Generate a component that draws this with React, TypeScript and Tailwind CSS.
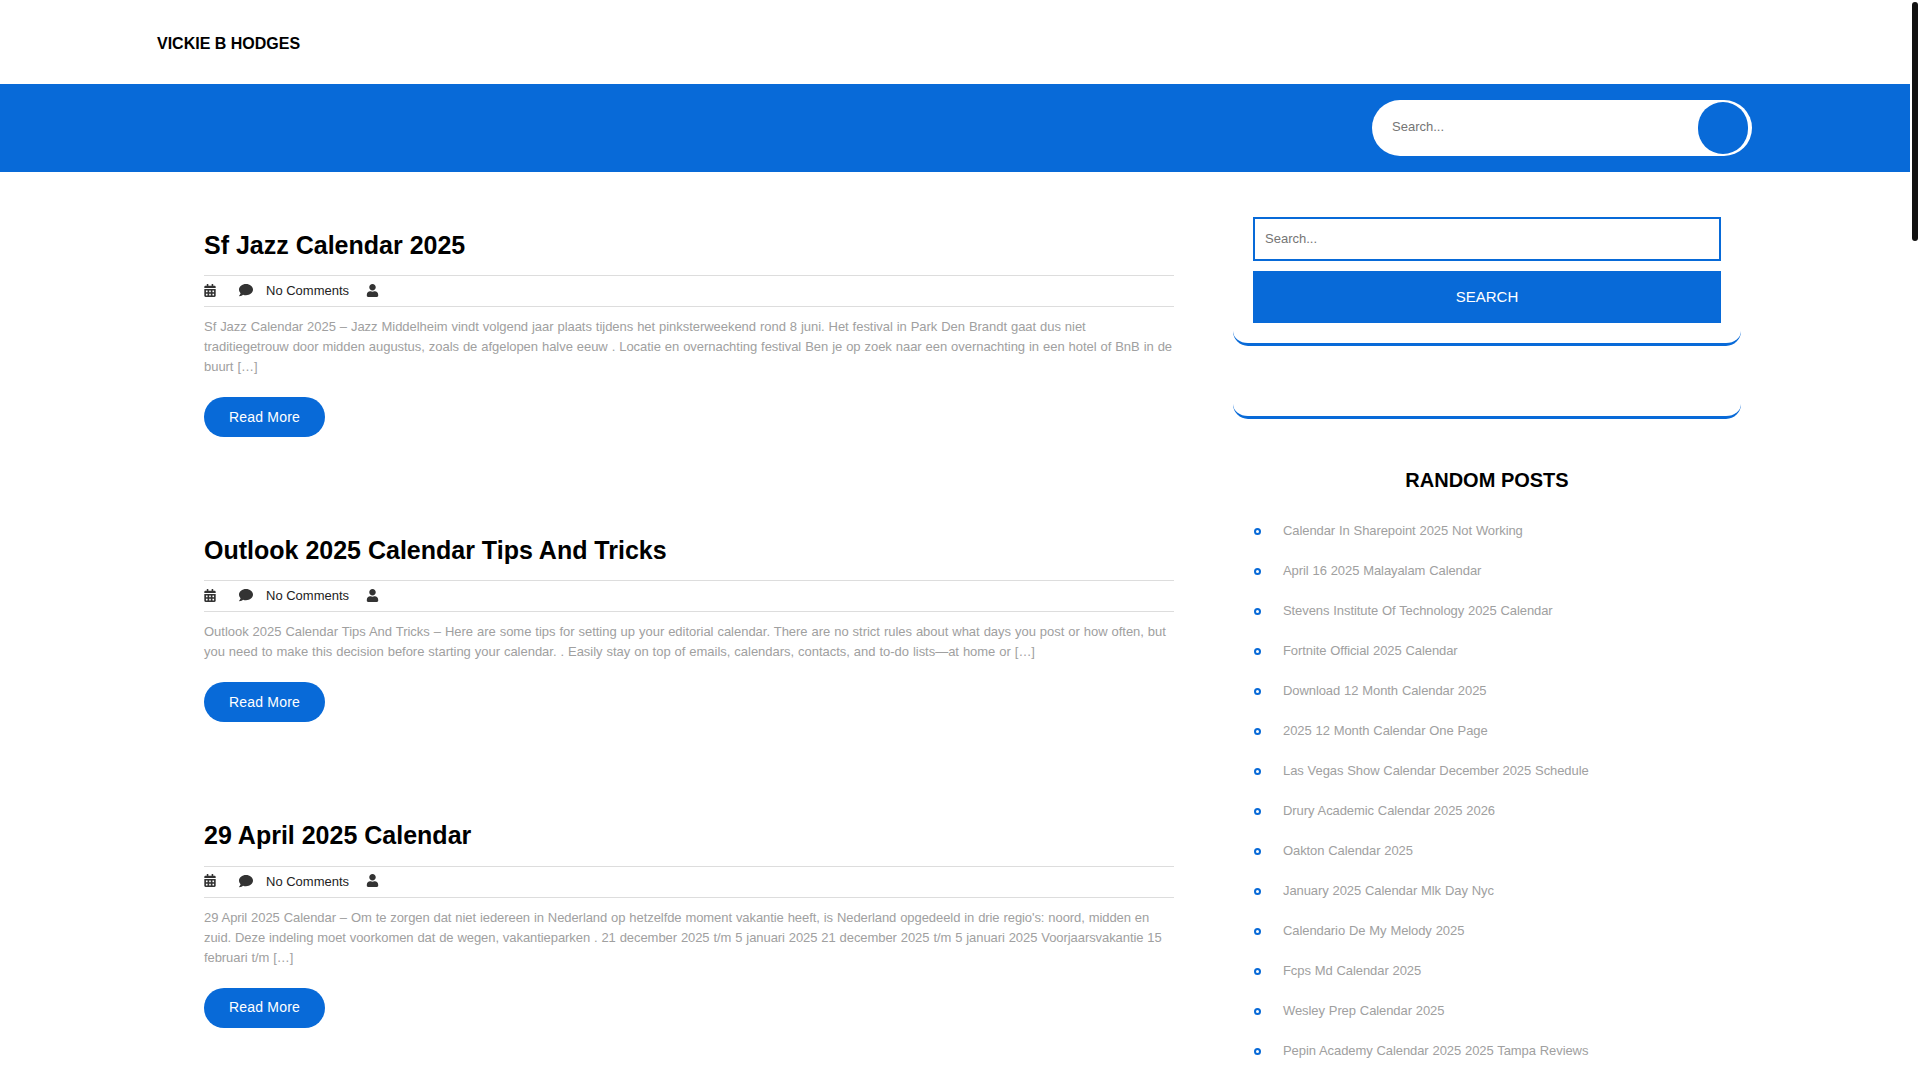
import { FaCalendarAlt, FaComment, FaUser } from "react-icons/fa";

const posts = [
  {
    title: "Sf Jazz Calendar 2025",
    fit: "tracking-[-0.04px]",
    excerpt:
      "Sf Jazz Calendar 2025 – Jazz Middelheim vindt volgend jaar plaats tijdens het pinksterweekend rond 8 juni. Het festival in Park Den Brandt gaat dus niet traditiegetrouw door midden augustus, zoals de afgelopen halve eeuw . Locatie en overnachting festival Ben je op zoek naar een overnachting in een hotel of BnB in de buurt […]",
  },
  {
    title: "Outlook 2025 Calendar Tips And Tricks",
    fit: "tracking-[-0.025px]",
    excerpt:
      "Outlook 2025 Calendar Tips And Tricks – Here are some tips for setting up your editorial calendar. There are no strict rules about what days you post or how often, but you need to make this decision before starting your calendar. . Easily stay on top of emails, calendars, contacts, and to-do lists—at home or […]",
  },
  {
    title: "29 April 2025 Calendar",
    fit: "tracking-[-0.07px]",
    excerpt:
      "29 April 2025 Calendar – Om te zorgen dat niet iedereen in Nederland op hetzelfde moment vakantie heeft, is Nederland opgedeeld in drie regio's: noord, midden en zuid. Deze indeling moet voorkomen dat de wegen, vakantieparken . 21 december 2025 t/m 5 januari 2025 21 december 2025 t/m 5 januari 2025 Voorjaarsvakantie 15 februari t/m […]",
  },
];

const randomPosts = [
  "Calendar In Sharepoint 2025 Not Working",
  "April 16 2025 Malayalam Calendar",
  "Stevens Institute Of Technology 2025 Calendar",
  "Fortnite Official 2025 Calendar",
  "Download 12 Month Calendar 2025",
  "2025 12 Month Calendar One Page",
  "Las Vegas Show Calendar December 2025 Schedule",
  "Drury Academic Calendar 2025 2026",
  "Oakton Calendar 2025",
  "January 2025 Calendar Mlk Day Nyc",
  "Calendario De My Melody 2025",
  "Fcps Md Calendar 2025",
  "Wesley Prep Calendar 2025",
  "Pepin Academy Calendar 2025 2025 Tampa Reviews",
];

function PostCard({ title, excerpt, fit }: { title: string; excerpt: string; fit: string }) {
  return (
    <article className="mb-[95.9px]">
      <h2 className="text-[25px] leading-[35.5px] font-bold text-black mb-[12px]">{title}</h2>
      {/* Meta row */}
      <div className="h-[32px] border-y border-[#dddddd] flex items-center text-[13px] text-[#222222]">
        <FaCalendarAlt className="w-[12px] h-[13px] mb-[2px] text-[#333333]" />
        <FaComment className="w-[16px] h-[14px] ml-[22px] mb-[2px] text-[#333333]" />
        <span className="ml-[12px] relative -top-[0.5px]">No Comments</span>
        <FaUser className="w-[13px] h-[13px] ml-[17px] mb-[2px] text-[#333333]" />
      </div>
      <p className={`mt-[10px] text-[13px] leading-[20px] text-[#a0a0a0] [word-spacing:0.39px] ${fit}`}>
        {excerpt}
      </p>
      <button
        type="button"
        className="block mt-[20px] w-[121px] h-[40px] rounded-[20px] bg-[#086ad8] text-white text-[14px] tracking-[0.2px]"
      >
        Read More
      </button>
    </article>
  );
}

export default function App() {
  return (
    <div className="flex h-screen overflow-hidden bg-white font-['Liberation_Sans',Arial,sans-serif]">
      <div className="flex-1 min-w-0">
        <header className="h-[84px] flex items-center pl-[157px]">
          <span className="text-[16px] font-bold text-black relative top-[2px]">VICKIE B HODGES</span>
        </header>

        {/* Blue search band */}
        <div className="h-[88px] bg-[#086ad8] flex items-center justify-end pr-[158px]">
          <div className="w-[380px] h-[56px] rounded-[28px] bg-white flex items-center justify-between pl-[20px] pr-[4px]">
            <span className="text-[13px] text-[#757575] relative -top-[1px]">Search...</span>
            <button type="button" className="w-[50px] h-[52px] rounded-full bg-[#086ad8]" aria-label="Search" />
          </div>
        </div>

        <div className="flex">
          <main className="ml-[204px] w-[970px] pt-[55.5px]">
            {posts.map((p) => (
              <PostCard key={p.title} title={p.title} excerpt={p.excerpt} fit={p.fit} />
            ))}
          </main>

          <aside className="ml-[59px] w-[508px] pt-[45px]">
            <div className="h-[129px] px-[20px] border-b-[3px] border-[#086ad8] rounded-b-[15px]">
              <div className="h-[44px] border-2 border-[#086ad8] flex items-center pl-[10px] text-[13px] text-[#757575]">
                Search...
              </div>
              <button
                type="button"
                className="block w-full h-[52px] mt-[10px] bg-[#086ad8] text-white text-[15px]"
              >
                SEARCH
              </button>
            </div>
            <div className="h-[73px] border-b-[3px] border-[#086ad8] rounded-b-[15px]" />
            <h3 className="mt-[47px] text-center text-[20px] leading-[28px] font-bold text-black">RANDOM POSTS</h3>
            <ul className="mt-[17px] ml-[21px]">
              {randomPosts.map((t) => (
                <li key={t} className="h-[40px] flex items-center text-[13px] text-[#a0a0a0]">
                  <span className="w-[7px] h-[7px] rounded-full border-[2.75px] border-[#086ad8]" />
                  <span className="ml-[22px] [word-spacing:0.39px] tracking-[-0.085px]">{t}</span>
                </li>
              ))}
            </ul>
          </aside>
        </div>
      </div>

      {/* Scrollbar */}
      <div className="w-[10px] shrink-0 pt-[2px] pl-[2px]">
        <div className="w-[6px] h-[239px] rounded-[3px] bg-[#111111]" />
      </div>
    </div>
  );
}
